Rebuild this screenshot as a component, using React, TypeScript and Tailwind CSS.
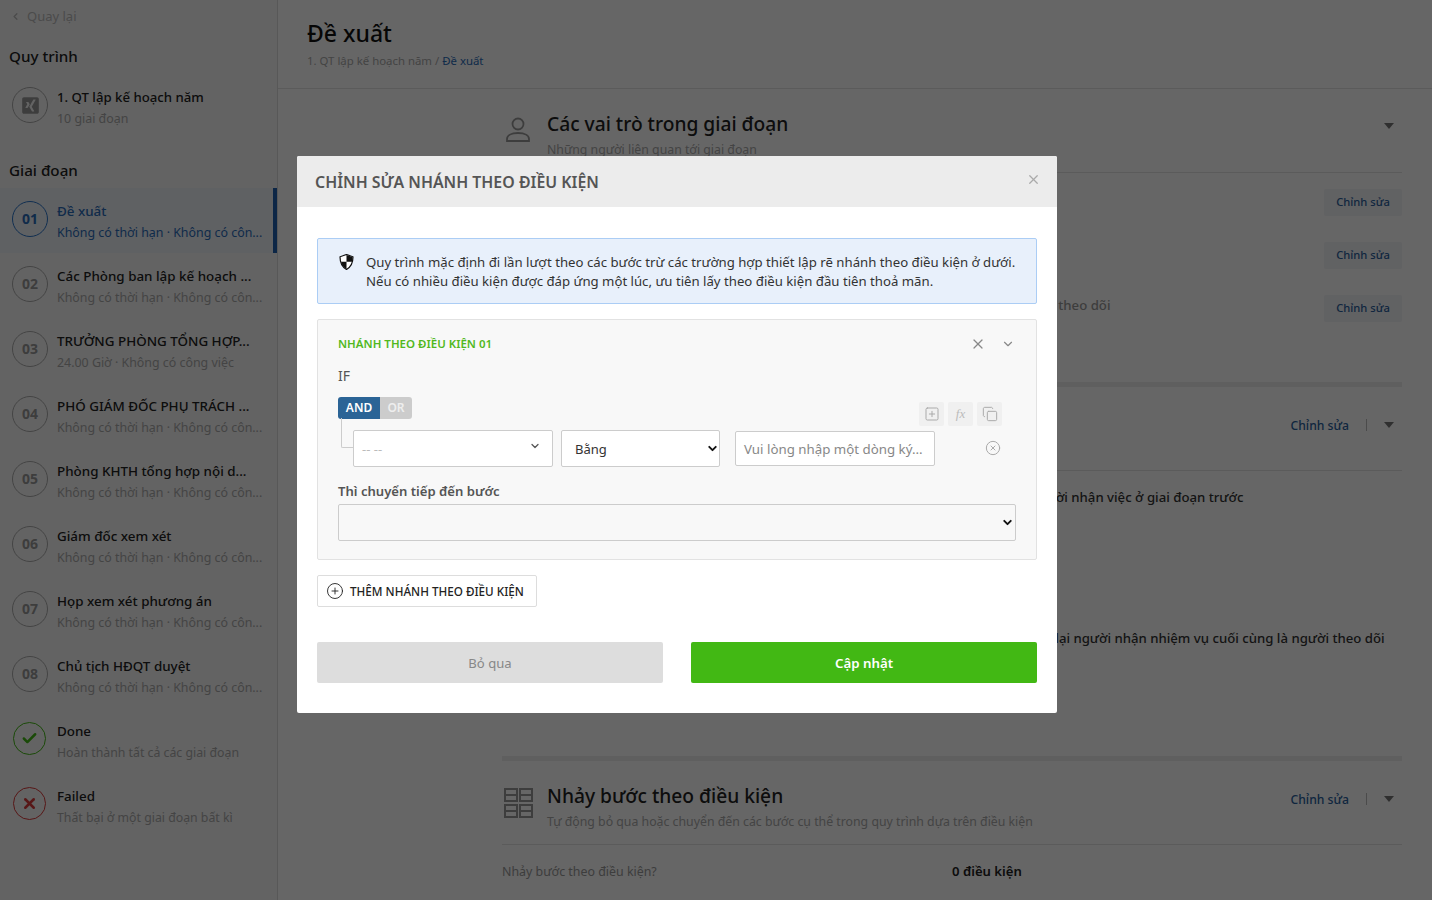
import React from 'react';
import { ChevronLeft, ChevronDown, X, Check, SquarePlus, Copy, CircleX, CirclePlus } from 'lucide-react';
import { FaXingSquare } from 'react-icons/fa';

const stages = [
  { no: '02', name: 'Các Phòng ban lập kế hoạch ...', sub: 'Không có thời hạn · Không có côn...' },
  { no: '03', name: 'TRƯỞNG PHÒNG TỔNG HỢP...', sub: '24.00 Giờ · Không có công việc' },
  { no: '04', name: 'PHÓ GIÁM ĐỐC PHỤ TRÁCH ...', sub: 'Không có thời hạn · Không có côn...' },
  { no: '05', name: 'Phòng KHTH tổng hợp nội d...', sub: 'Không có thời hạn · Không có côn...' },
  { no: '06', name: 'Giám đốc xem xét', sub: 'Không có thời hạn · Không có côn...' },
  { no: '07', name: 'Họp xem xét phương án', sub: 'Không có thời hạn · Không có côn...' },
  { no: '08', name: 'Chủ tịch HĐQT duyệt', sub: 'Không có thời hạn · Không có côn...' },
];

const Caret = () => (
  <span className="block w-0 h-0 border-x-[5px] border-x-transparent border-t-[6px] border-t-[#777]" />
);

const StageRow = ({ no, name, sub }: { no: string; name: string; sub: string }) => (
  <div className="h-[65px] flex items-start pt-[13px] pl-3 pr-3 gap-[9px]">
    <div className="w-9 h-9 rounded-full border border-[#aaa] flex items-center justify-center text-sm font-bold text-[#999] shrink-0">{no}</div>
    <div className="min-w-0 -mt-[1px]">
      <div className="text-[13.4px] font-medium leading-[22px] text-[#222] whitespace-nowrap">{name}</div>
      <div className="mt-[1px] text-[12.4px] leading-[20px] text-[#aaa] whitespace-nowrap">{sub}</div>
    </div>
  </div>
);

const EditChip = () => (
  <button className="w-[78px] h-[27px] rounded-[2px] bg-[#f2f4f7] text-[11.2px] font-medium text-[#2a5f9e]">Chỉnh sửa</button>
);

const SectionActions = () => (
  <div className="flex items-center gap-[17px] pr-[8px]">
    <span className="mt-[2px] text-[12.2px] font-medium text-[#2a5f9e]">Chỉnh sửa</span>
    <span className="w-px h-3 bg-[#bbb]" />
    <Caret />
  </div>
);

const Sidebar = () => (
  <aside className="w-[278px] h-[900px] shrink-0 border-r border-[#ddd] bg-[#f8f8f8]">
    <div className="h-[32px] pl-[10px] flex items-center gap-[6px] text-[13px] text-[#bbb]">
      <ChevronLeft size={11} strokeWidth={3} />
      <span className="pt-[1px]">Quay lại</span>
    </div>
    <h2 className="pl-[9px] mt-[12px] text-[15.2px] leading-6 font-medium text-[#222]">Quy trình</h2>
    <div className="h-[65px] flex items-start pt-[15px] pl-3 gap-[9px] mt-[4px]">
      <div className="w-9 h-9 rounded-full border border-[#aaa] flex items-center justify-center shrink-0">
        <FaXingSquare size={19} className="text-[#999]" />
      </div>
      <div className="-mt-[1px]">
        <div className="text-[13.2px] font-medium leading-[22px] text-[#222]">1. QT lập kế hoạch năm</div>
        <div className="mt-[1px] text-[12.4px] leading-[20px] text-[#aaa]">10 giai đoạn</div>
      </div>
    </div>
    <h2 className="pl-[9px] mt-[21px] text-[15.2px] leading-6 font-medium text-[#222]">Giai đoạn</h2>
    <div className="mt-[6px] h-[65px] flex items-start pt-[13px] pl-3 gap-[9px] bg-[#eef2f8] border-r-[4px] border-[#1f5fb0]">
      <div className="w-9 h-9 rounded-full border border-[#2a75c9] flex items-center justify-center text-sm font-bold text-[#2a6cb8] shrink-0">01</div>
      <div className="min-w-0 -mt-[1px]">
        <div className="text-[13.4px] font-medium leading-[22px] text-[#2a6cb8]">Đề xuất</div>
        <div className="mt-[1px] text-[12.4px] leading-[20px] text-[#2a6cb8] whitespace-nowrap">Không có thời hạn · Không có côn...</div>
      </div>
    </div>
    {stages.map((s) => <StageRow key={s.no} {...s} />)}
    <div className="h-[65px] flex items-start pt-[14px] pl-[13px] gap-[11px]">
      <div className="w-[33px] h-[33px] rounded-full border border-[#42b814] flex items-center justify-center shrink-0">
        <Check size={17} strokeWidth={3.5} className="text-[#42b814]" />
      </div>
      <div className="-mt-[2px]">
        <div className="text-[13.4px] font-medium leading-[22px] text-[#222]">Done</div>
        <div className="mt-[1px] text-[12.3px] leading-[20px] text-[#aaa]">Hoàn thành tất cả các giai đoạn</div>
      </div>
    </div>
    <div className="h-[65px] flex items-start pt-[14px] pl-[13px] gap-[11px]">
      <div className="w-[33px] h-[33px] rounded-full border border-[#d93a3a] flex items-center justify-center shrink-0">
        <X size={17} strokeWidth={3.5} className="text-[#d93a3a]" />
      </div>
      <div className="-mt-[2px]">
        <div className="text-[13.4px] font-medium leading-[22px] text-[#222]">Failed</div>
        <div className="mt-[1px] text-[12.3px] leading-[20px] text-[#aaa]">Thất bại ở một giai đoạn bất kì</div>
      </div>
    </div>
  </aside>
);

const Main = () => (
  <main className="flex-1 h-[900px] overflow-hidden bg-white">
    <header className="h-[89px] border-b border-[#e3e3e3] pl-[29px] pt-[16px]">
      <h1 className="text-[23px] leading-[34px] font-medium text-[#111]">Đề xuất</h1>
      <div className="mt-[1px] text-[11.4px] leading-5 text-[#aaa]">
        1. QT lập kế hoạch năm / <span className="text-[#2a6cb8]">Đề xuất</span>
      </div>
    </header>
    <div className="ml-[224px] mr-[30px]">
      {/* vai trò */}
      <section className="h-[84px] border-b border-[#e3e3e3] flex pt-[21px]">
        <svg width="28" height="28" viewBox="0 0 28 28" fill="none" stroke="#999" strokeWidth="1.8" className="ml-[2px] mt-[6px]">
          <circle cx="14" cy="8" r="5.5" />
          <path d="M3 25v-2c0-3.5 4-6 11-6s11 2.500 11 6v2z" />
        </svg>
        <div className="ml-[15px] flex-1">
          <h3 className="text-[19.2px] leading-7 font-medium text-[#222]">Các vai trò trong giai đoạn</h3>
          <p className="mt-[3px] text-[12.3px] leading-[18px] text-[#aaa]">Những người liên quan tới giai đoạn</p>
        </div>
        <div className="pr-[8px] pt-[13px]"><Caret /></div>
      </section>
      <div className="h-[209px] pt-[16px] flex flex-col gap-[26px] items-end relative">
        <EditChip />
        <EditChip />
        <EditChip />
        <span className="absolute left-[446px] top-[123px] text-[13.2px] font-medium text-[#999] whitespace-nowrap">Danh sách người theo dõi</span>
      </div>
      <div className="h-[5px] bg-[#eee]" />
      {/* nhận việc */}
      <section className="h-[84px] border-b border-[#e3e3e3] flex justify-end pt-[28px]">
        <div className="h-fit"><SectionActions /></div>
      </section>
      <div className="h-[285px] pl-[450px]">
        <p className="-ml-[8px] pt-[16px] text-[13.2px] leading-5 font-medium text-[#333] whitespace-nowrap">Tự động giao người nhận việc ở giai đoạn trước</p>
        <p className="ml-[17px] pt-[121px] text-[13.2px] leading-5 font-medium text-[#333] whitespace-nowrap">Tự động giao lại người nhận nhiệm vụ cuối cùng là người theo dõi</p>
      </div>
      <div className="h-[5px] bg-[#eee]" />
      {/* nhảy bước */}
      <section className="h-[84px] border-b border-[#e3e3e3] flex pt-[21px]">
        <svg width="30" height="30" viewBox="0 0 30 30" fill="none" stroke="#999" strokeWidth="2" className="ml-[1px] mt-[6px] shrink-0">
          <rect x="2" y="1" width="12" height="12" />
          <path d="M2 7h12" />
          <rect x="17" y="1" width="12" height="12" />
          <path d="M17 7h12" />
          <rect x="2" y="17" width="12" height="12" />
          <path d="M2 23h12" />
          <rect x="17" y="17" width="12" height="12" />
          <path d="M17 23h12" />
        </svg>
        <div className="ml-[14px] flex-1">
          <h3 className="text-[19.2px] leading-7 font-medium text-[#222]">Nhảy bước theo điều kiện</h3>
          <p className="mt-[3px] text-[12.3px] leading-[18px] text-[#aaa]">Tự động bỏ qua hoặc chuyển đến các bước cụ thể trong quy trình dựa trên điều kiện</p>
        </div>
        <div className="pt-[7px] h-fit"><SectionActions /></div>
      </section>
      <div className="flex pt-[16px] text-[12.4px] leading-5">
        <span className="w-[450px] pt-[1px] text-[#999]">Nhảy bước theo điều kiện?</span>
        <span className="font-semibold text-[#222] text-[13.1px]">0 điều kiện</span>
      </div>
    </div>
  </main>
);

const Modal = () => (
  <div className="w-[760px] h-[557px] mt-[156px] ml-[297px] bg-white rounded-[2px] overflow-hidden">
    <div className="h-[51px] bg-[#ececec] flex items-center justify-between pl-[18px] pr-[16px]">
      <h2 className="pt-[2px] text-[15.9px] font-semibold text-[#555]">CHỈNH SỬA NHÁNH THEO ĐIỀU KIỆN</h2>
      <X size={15} strokeWidth={2} className="text-[#aaa] -mt-[5px]" />
    </div>
    <div className="px-5 pt-[31px]">
      <div className="h-[66px] rounded-[2px] border border-[#abcdf5] bg-[#e8f0fb] flex items-center pl-[21px] gap-[12px]">
        <svg width="15" height="16" viewBox="0 0 15 16" className="shrink-0 -mt-[18px]">
          <path d="M7.5 0.5 14 2.8c0 5.6-1.6 10-6.5 12.7C2.6 12.8 1 8.4 1 2.8z" fill="#fff" stroke="#111" strokeWidth="1.2" />
          <path d="M7.5 1 13.5 3.1c0 1.6-.1 3.2-.5 4.6H7.5zM7.5 7.7V15C4.3 13.2 2.7 10.700 2 7.700z" fill="#111" />
        </svg>
        <p className="pt-[2px] text-[13.2px] leading-[19px] text-[#333] whitespace-nowrap">
          Quy trình mặc định đi lần lượt theo các bước trừ các trường hợp thiết lập rẽ nhánh theo điều kiện ở dưới.<br />
          Nếu có nhiều điều kiện được đáp ứng một lúc, ưu tiên lấy theo điều kiện đầu tiên thoả mãn.
        </p>
      </div>
      <div className="mt-[15px] h-[241px] rounded-[2px] border border-[#e2e2e2] bg-[#f8f8f8] px-5">
        <div className="flex items-center justify-between h-[47px] pt-[1px]">
          <span className="text-[11.500px] font-semibold text-[#52b81e]">NHÁNH THEO ĐIỀU KIỆN 01</span>
          <div className="flex items-center gap-[15px] pr-[1px] text-[#888]">
            <X size={16} strokeWidth={1.8} />
            <ChevronDown size={14} strokeWidth={2} />
          </div>
        </div>
        <div className="text-[14px] leading-5 text-[#555] mt-[-1px]">IF</div>
        <div className="flex items-start justify-between mt-[11px] h-[30px]">
          <div className="flex h-[22px] rounded-[3px] overflow-hidden text-[12px] font-semibold leading-[22px] text-center">
            <span className="w-[42px] bg-[#2b6496] text-white">AND</span>
            <span className="w-[32px] bg-[#ccc] text-[#eee]">OR</span>
          </div>
          <div className="flex items-center gap-[4px] mt-[5px] mr-[14px] text-[#aaa]">
            <span className="w-[25px] h-[24px] rounded-[2px] bg-[#f0f0f0] flex items-center justify-center"><SquarePlus size={16} strokeWidth={1.5} /></span>
            <span className="w-[25px] h-[24px] rounded-[2px] bg-[#f0f0f0] flex items-center justify-center font-['Liberation_Serif',serif] italic text-[13px] text-[#bbb]">fx</span>
            <span className="w-[25px] h-[24px] rounded-[2px] bg-[#f0f0f0] flex items-center justify-center"><Copy size={16} strokeWidth={1.5} /></span>
          </div>
        </div>
        <div className="relative flex items-center mt-[3px] pl-[15px] h-[37px]">
          <span className="absolute left-[3px] -top-[12px] w-[12px] h-[30px] border-l border-b border-[#ccc] rounded-bl-[2px]" />
          <div className="w-[200px] h-[37px] border border-[#ccc] rounded-[2px] bg-white flex justify-between pl-2 pr-[11px] items-center">
            <span className="text-[13px] text-[#bbb] pt-[2px]">-- --</span>
            <ChevronDown size={12} strokeWidth={2.5} className="text-[#555] -mt-[6px]" />
          </div>
          <div className="relative ml-2 w-[159px]">
            <select className="appearance-none block w-full h-[37px] border border-[#ccc] rounded-[2px] bg-white pl-[13px] pt-[2px] text-[13px] text-[#333]">
              <option>Bằng</option>
            </select>
            <ChevronDown size={13} strokeWidth={3.5} className="absolute right-[1px] top-[12px] text-[#111]" />
          </div>
          <div className="ml-[15px] w-[200px] h-[35px] border border-[#ccc] rounded-[2px] bg-white flex items-center pl-2 pt-[2px] text-[13.3px] text-[#888] whitespace-nowrap">Vui lòng nhập một dòng ký...</div>
          <CircleX size={16} strokeWidth={1.5} className="ml-[50px] -mt-[2px] text-[#aaa]" />
        </div>
        <div className="mt-[14px] text-[13.1px] leading-5 font-semibold text-[#555]">Thì chuyển tiếp đến bước</div>
        <div className="relative mt-[3px]">
          <select className="appearance-none block w-full h-[37px] border border-[#ccc] rounded-[2px] bg-[#f8f8f8]" />
          <ChevronDown size={13} strokeWidth={3.5} className="absolute right-[2px] top-[12px] text-[#111]" />
        </div>
      </div>
      <button className="mt-[15px] w-[220px] h-[32px] border border-[#ddd] rounded-[2px] flex items-center pl-[8px] gap-[6px] text-[11.7px] font-medium text-[#222] whitespace-nowrap">
        <CirclePlus size={18} strokeWidth={1.2} />
        <span className="pt-[1px]">THÊM NHÁNH THEO ĐIỀU KIỆN</span>
      </button>
      <div className="mt-[35px] flex justify-between">
        <button className="w-[346px] h-[41px] pt-[2px] rounded-[2px] bg-[#ddd] text-[13.1px] text-[#888]">Bỏ qua</button>
        <button className="w-[346px] h-[41px] pt-[2px] rounded-[2px] bg-[#42b814] text-[13.3px] font-semibold text-white">Cập nhật</button>
      </div>
    </div>
  </div>
);

export default function App() {
  return (
    <div className="relative w-[1432px] h-[900px] overflow-hidden flex font-['Noto_Sans','Open_Sans',sans-serif]">
      <Sidebar />
      <Main />
      <div className="absolute inset-0 bg-black/60">
        <Modal />
      </div>
    </div>
  );
}
